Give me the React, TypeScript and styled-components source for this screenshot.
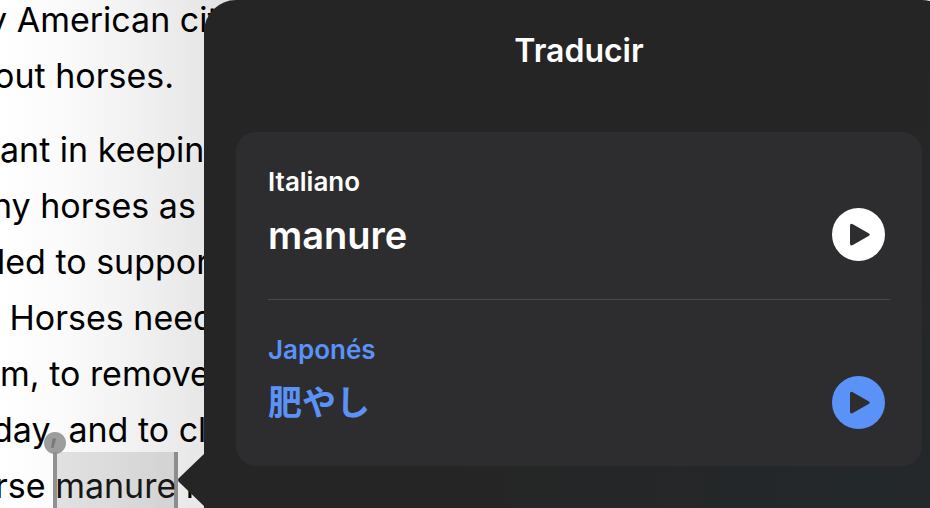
import React from 'react';
import styled, { createGlobalStyle } from 'styled-components';

const GlobalStyle = createGlobalStyle`
  *, *::before, *::after { box-sizing: border-box; }
  html, body, #root { height: 100%; }
  body {
    margin: 0;
    overflow: hidden;
    background: #ffffff;
    font-family: Inter, 'Noto Sans CJK JP', sans-serif;
  }
`;

const Screen = styled.div`
  display: grid;
  grid-template-columns: 204px minmax(0, 1fr);
  height: 100%;
  overflow: hidden;
`;

const Article = styled.article`
  display: flex;
  flex-direction: column;
  gap: 18px;
  min-width: 0;
  min-height: 0;
  margin-top: -8px;
  margin-right: -32px;
  overflow: hidden;
  background: linear-gradient(to right, #ffffff 0, #fbfbfb 60px, #f2f2f2 130px, #e7e7e7 204px, #dedede 236px);
`;

const Paragraph = styled.p`
  margin: 0;
  color: #000000;
  font-size: 34px;
  line-height: 56px;
  white-space: pre;
`;

const Line = styled.span<{ $cut?: number }>`
  display: block;
  margin-left: ${({ $cut = 0 }) => -$cut}px;
`;

const Selection = styled.mark`
  position: relative;
  background: none;
  color: #1a1a1a;

  &::before {
    content: '';
    position: absolute;
    inset: -13px -2px;
    border: solid rgba(110, 110, 110, 0.75);
    border-width: 0 4px;
    background: rgba(0, 0, 0, 0.1);
    background-clip: padding-box;
  }
`;

const Knob = styled.span<{ $end?: boolean }>`
  position: absolute;
  ${({ $end }) => ($end ? 'right: -11px; bottom: -34px;' : 'left: -11px; top: -33px;')}
  width: 22px;
  height: 22px;
  border-radius: 50%;
  background: rgba(140, 140, 140, 0.85);
`;

const Popover = styled.section`
  position: relative;
  display: flex;
  flex-direction: column;
  margin-right: -24px;
  padding: 0 32px;
  border-radius: 32px 32px 0 0;
  background: radial-gradient(circle at 88% 96%, #23282b 0%, #252627 30%, #252525 55%);
  color: #ffffff;
`;

const Arrow = styled.svg`
  position: absolute;
  left: -27px;
  top: 452px;
  width: 28px;
  height: 56px;
  fill: #252525;
`;

const Title = styled.h1`
  margin: 0;
  padding: 27px 0 57px;
  font-size: 32px;
  font-weight: 600;
  line-height: 48px;
  text-align: center;
`;

const Card = styled.div`
  padding: 0 32px;
  border-radius: 20px;
  background: #2d2d2f;
`;

const Entry = styled.div<{ $accent?: boolean }>`
  display: flex;
  align-items: flex-end;
  justify-content: space-between;
  height: 167px;
  padding: 32px 5px 38px 0;
  color: ${({ $accent }) => ($accent ? '#5b92f8' : '#ffffff')};

  & + & {
    padding-bottom: 37px;
    border-top: 1px solid #48484a;
  }
`;

const Words = styled.div`
  align-self: flex-start;
`;

const Language = styled.h2`
  margin: 0;
  font-size: 26px;
  font-weight: 600;
  line-height: 36px;
`;

const Phrase = styled.p<{ $cjk?: boolean }>`
  margin: 0;
  padding-top: 8px;
  font-size: ${({ $cjk }) => ($cjk ? 34 : 38)}px;
  font-weight: 600;
  line-height: 54px;
`;

const PlayButton = styled.button`
  display: block;
  width: 53px;
  height: 53px;
  padding: 0;
  border: 0;
  border-radius: 50%;
  background: currentColor;
  color: inherit;
  cursor: pointer;

  svg {
    display: block;
    width: 100%;
    height: 100%;
    fill: #2d2d2f;
  }
`;

const entries = [
  { language: 'Italiano', phrase: 'manure', lang: 'it', accent: false },
  { language: 'Japonés', phrase: '肥やし', lang: 'ja', accent: true },
];

export default function App() {
  return (
    <>
      <GlobalStyle />
      <Screen>
        <Article lang="en">
          <Paragraph>
            <Line $cut={12}>y American cities</Line>
            <Line $cut={6}>out horses.</Line>
          </Paragraph>
          <Paragraph>
            <Line>ant in keeping</Line>
            <Line $cut={8}>ny horses as</Line>
            <Line $cut={3}>led to support</Line>
            <Line> Horses needed</Line>
            <Line>m, to remove</Line>
            <Line $cut={8}>day, and to clean</Line>
            <Line $cut={5}>
              rse <Selection>manure<Knob /><Knob $end /></Selection> ran
            </Line>
          </Paragraph>
        </Article>
        <Popover aria-labelledby="title">
          <Arrow viewBox="0 0 28 56" aria-hidden="true">
            <path d="M28 1 27 2 3 25Q-1 28 3 31L27 54 28 55Z" />
          </Arrow>
          <Title id="title">Traducir</Title>
          <Card>
            {entries.map(({ language, phrase, lang, accent }) => (
              <Entry key={lang} $accent={accent}>
                <Words>
                  <Language>{language}</Language>
                  <Phrase lang={lang} $cjk={lang === 'ja'}>{phrase}</Phrase>
                </Words>
                <PlayButton type="button" aria-label={`Reproducir ${language}`}>
                  <svg viewBox="0 0 53 53" aria-hidden="true">
                    <path d="M18 17.8Q18 14.8 20.8 16.2L36.6 25.2Q39 26.6 36.6 28L20.8 37Q18 38.4 18 35.4Z" />
                  </svg>
                </PlayButton>
              </Entry>
            ))}
          </Card>
        </Popover>
      </Screen>
    </>
  );
}
